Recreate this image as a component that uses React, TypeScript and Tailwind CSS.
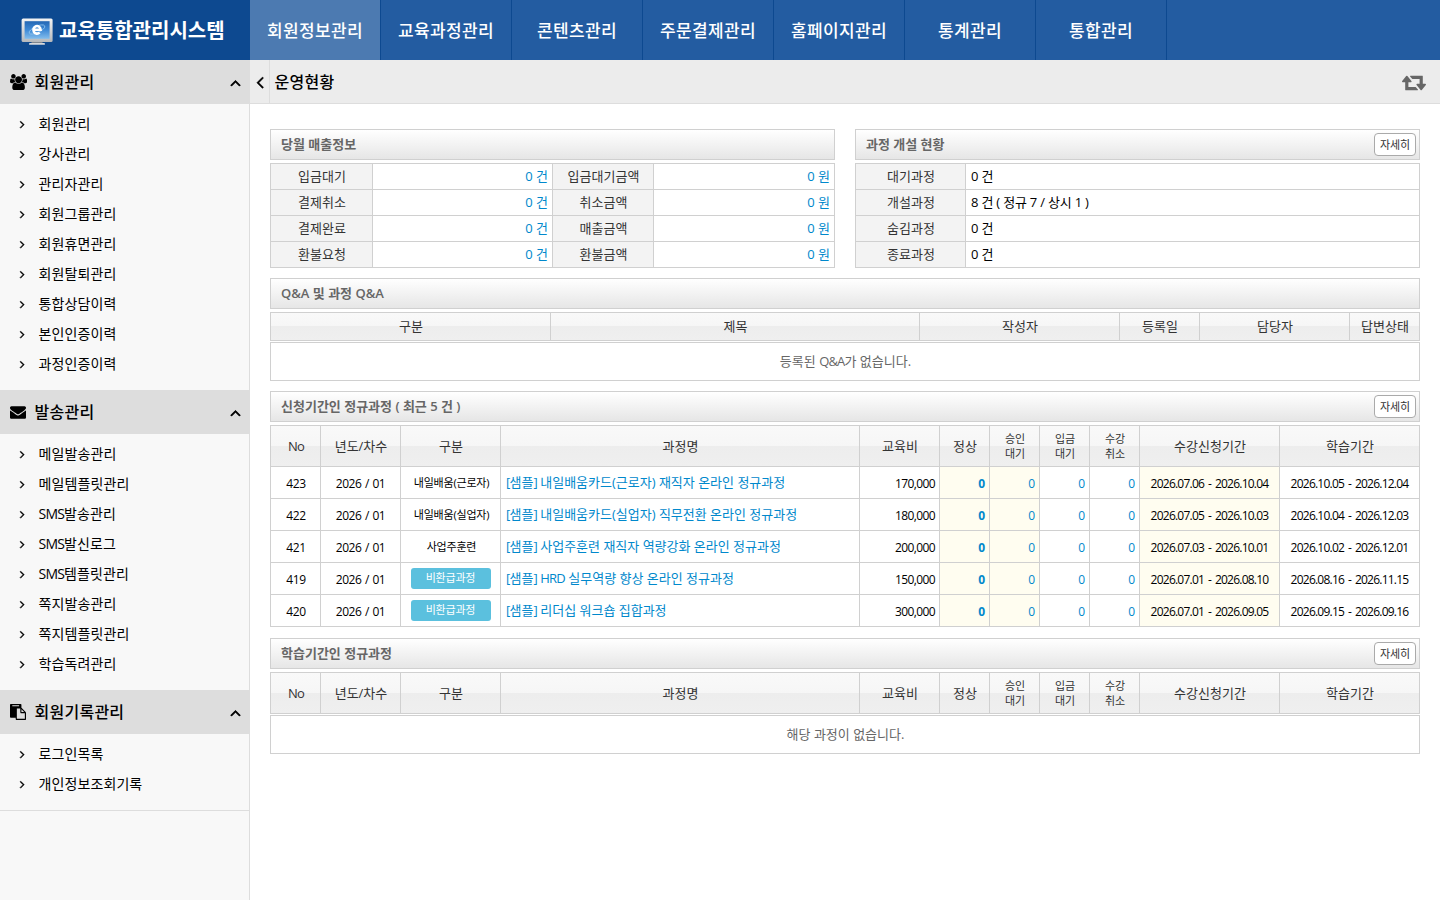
import React from 'react';

interface MenuGroup {
  title: string;
  icon: React.ReactNode;
  items: string[];
}

interface Course {
  no: number;
  type: string;
  badge?: boolean;
  name: string;
  price: string;
  apply: string;
  study: string;
}

interface IconProps {
  path: string;
  size: number;
  width?: number;
  stroke?: number;
  className?: string;
}

const Icon: React.FC<IconProps> = ({ path, size, width = 1792, stroke = 0, className }) => (
  <svg
    width={(size * width) / 1792}
    height={size}
    viewBox={`0 0 ${width} 1792`}
    fill="currentColor"
    stroke="currentColor"
    strokeWidth={stroke}
    className={className}
  >
    <path d={path} />
  </svg>
);

const icons = {
  users: 'M593 896q-162 5-265 128h-134q-82 0-138-40.5t-56-118.5q0-353 124-353 6 0 43.5 21t97.5 42.5 119 21.5q67 0 133-23-5 37-5 66 0 139 81 256zm1071 637q0 120-73 189.5t-194 69.5h-874q-121 0-194-69.5t-73-189.5q0-53 3.5-103.5t14-109 26.5-108.5 43-97.5 62-81 85.5-53.5 111.5-20q10 0 43 21.5t73 48 107 48 135 21.5 135-21.5 107-48 73-48 43-21.5q61 0 111.5 20t85.5 53.5 62 81 43 97.5 26.5 108.5 14 109 3.5 103.5zm-1024-1277q0 106-75 181t-181 75-181-75-75-181 75-181 181-75 181 75 75 181zm704 384q0 159-112.5 271.5t-271.5 112.5-271.5-112.5-112.5-271.5 112.5-271.5 271.5-112.5 271.5 112.5 112.5 271.5zm576 225q0 78-56 118.5t-138 40.5h-134q-103-123-265-128 81-117 81-256 0-29-5-66 66 23 133 23 59 0 119-21.5t97.5-42.5 43.5-21q124 0 124 353zm-128-609q0 106-75 181t-181 75-181-75-75-181 75-181 181-75 181 75 75 181z',
  envelope: 'M1792 710v794q0 66-47 113t-113 47h-1472q-66 0-113-47t-47-113v-794q44 49 101 87 362 246 497 345 57 42 92.5 65.5t94.5 48 110 24.5h2q51 0 110-24.5t94.5-48 92.5-65.5q170-123 498-345 57-39 100-87zm0-294q0 79-49 151t-122 123q-376 261-468 325-10 7-42.5 31t-54 38.5-52 32.5-57.5 27-50 9h-2q-23 0-50-9t-57.5-27-52-32.5-54-38.5-42.5-31q-91-64-262-182.5t-205-142.5q-62-42-117-115.5t-55-136.5q0-78 41.5-130t118.5-52h1472q65 0 112.5 47t47.5 113z',
  paste: 'M768 1664h896v-640h-416q-40 0-68-28t-28-68v-416h-384v1152zm256-1440v-64q0-13-9.5-22.5t-22.5-9.5h-704q-13 0-22.5 9.5t-9.5 22.5v64q0 13 9.5 22.5t22.5 9.5h704q13 0 22.5-9.5t9.5-22.5zm256 672h299l-299-299v299zm512 128v672q0 40-28 68t-68 28h-960q-40 0-68-28t-28-68v-160h-544q-40 0-68-28t-28-68v-1344q0-40 28-68t68-28h1088q40 0 68 28t28 68v328q21 13 36 28l408 408q28 28 48 76t20 88z',
  up: 'M1395 1184q0 13-10 23l-50 50q-10 10-23 10t-23-10l-393-393-393 393q-10 10-23 10t-23-10l-50-50q-10-10-10-23t10-23l466-466q10-10 23-10t23 10l466 466q10 10 10 23z',
  right: 'M1171 960q0 13-10 23l-466 466q-10 10-23 10t-23-10l-50-50q-10-10-10-23t10-23l393-393-393-393q-10-10-10-23t10-23l50-50q10-10 23-10t23 10l466 466q10 10 10 23z',
  left: 'M1203 544q0 13-10 23l-393 393 393 393q10 10 10 23t-10 23l-50 50q-10 10-23 10t-23-10l-466-466q-10-10-10-23t10-23l466-466q10-10 23-10t23 10l50 50q10 10 10 23z',
  retweet: 'M1280 1504q0 13-9.5 22.5t-22.5 9.5h-960q-8 0-13.5-2t-9-7-5.5-8-3-11.5-1-11.5v-600h-192q-26 0-45-19t-19-45q0-24 15-41l320-384q19-22 49-22t49 22l320 384q15 17 15 41 0 26-19 45t-45 19h-192v384h576q16 0 25 11l160 192q7 11 7 21zm640-416q0 24-15 41l-320 384q-20 23-49 23t-49-23l-320-384q-15-17-15-41 0-26 19-45t45-19h192v-384h-576q-16 0-25-12l-160-192q-7-9-7-20 0-13 9.5-22.5t22.5-9.5h960q8 0 13.5 2t9 7 5.5 8 3 11.5 1 11.5v600h192q26 0 45 19t19 45z'
};

const topMenus = ['회원정보관리', '교육과정관리', '콘텐츠관리', '주문결제관리', '홈페이지관리', '통계관리', '통합관리'];

const sideMenus: MenuGroup[] = [
  {
    title: '회원관리',
    icon: <Icon path={icons.users} size={16} width={1920} />,
    items: ['회원관리', '강사관리', '관리자관리', '회원그룹관리', '회원휴면관리', '회원탈퇴관리', '통합상담이력', '본인인증이력', '과정인증이력']
  },
  {
    title: '발송관리',
    icon: <Icon path={icons.envelope} size={16} />,
    items: ['메일발송관리', '메일템플릿관리', 'SMS발송관리', 'SMS발신로그', 'SMS템플릿관리', '쪽지발송관리', '쪽지템플릿관리', '학습독려관리']
  },
  {
    title: '회원기록관리',
    icon: <Icon path={icons.paste} size={16} />,
    items: ['로그인목록', '개인정보조회기록']
  }
];

const salesRows = [
  ['입금대기', '입금대기금액'],
  ['결제취소', '취소금액'],
  ['결제완료', '매출금액'],
  ['환불요청', '환불금액']
];

const openRows = [
  ['대기과정', '0 건'],
  ['개설과정', '8 건 ( 정규 7 / 상시 1 )'],
  ['숨김과정', '0 건'],
  ['종료과정', '0 건']
];

const courses: Course[] = [
  { no: 423, type: '내일배움(근로자)', name: '[샘플] 내일배움카드(근로자) 재직자 온라인 정규과정', price: '170,000', apply: '2026.07.06 - 2026.10.04', study: '2026.10.05 - 2026.12.04' },
  { no: 422, type: '내일배움(실업자)', name: '[샘플] 내일배움카드(실업자) 직무전환 온라인 정규과정', price: '180,000', apply: '2026.07.05 - 2026.10.03', study: '2026.10.04 - 2026.12.03' },
  { no: 421, type: '사업주훈련', name: '[샘플] 사업주훈련 재직자 역량강화 온라인 정규과정', price: '200,000', apply: '2026.07.03 - 2026.10.01', study: '2026.10.02 - 2026.12.01' },
  { no: 419, type: '비환급과정', badge: true, name: '[샘플] HRD 실무역량 향상 온라인 정규과정', price: '150,000', apply: '2026.07.01 - 2026.08.10', study: '2026.08.16 - 2026.11.15' },
  { no: 420, type: '비환급과정', badge: true, name: '[샘플] 리더십 워크숍 집합과정', price: '300,000', apply: '2026.07.01 - 2026.09.05', study: '2026.09.15 - 2026.09.16' }
];

const cell = 'flex items-center border-r border-b border-[#d0d0d0]';
const labelCell = `${cell} h-[26px] justify-center bg-[#f3f3f3] pl-[1px] text-[#333]`;
const headCell = `${cell} justify-center bg-[linear-gradient(#f9f9f9_0%,#f6f6f6_50%,#ededed_50%,#efefef_100%)] pl-[1px] text-[#333]`;
const countCell = `${cell} justify-end pt-[2px] pr-[4px] text-[12px] text-[#0088cc]`;
const dateCell = `${cell} justify-center pt-[2px] text-[12px] tracking-[-0.77px] [word-spacing:1.5px]`;
const courseGrid = 'grid grid-cols-[50px_80px_100px_359px_80px_50px_50px_50px_50px_140px_140px] border-l border-t border-[#d0d0d0]';

// Latin runs are set tighter than the Hangul around them
const Label: React.FC<{ text: string }> = ({ text }) => (
  <span className="whitespace-pre">
    {text.split(/([A-Za-z&[\]]+)/).map((part, i) =>
      i % 2 ? <span key={i} className="tracking-[-0.8px]">{part}</span> : part
    )}
  </span>
);

const LogoIcon = () => (
  <svg width="32" height="28" viewBox="0 0 32 28" className="mt-[3px]">
    <defs>
      <linearGradient id="screen" x1="0" y1="0" x2="0" y2="1">
        <stop offset="0" stopColor="#2467b4" />
        <stop offset="0.5" stopColor="#3f8ad6" />
        <stop offset="1" stopColor="#83bdec" />
      </linearGradient>
      <linearGradient id="frame" x1="0" y1="0" x2="0" y2="1">
        <stop offset="0" stopColor="#f4f4f4" />
        <stop offset="1" stopColor="#b4b7bb" />
      </linearGradient>
    </defs>
    <path d="M11 23.5h10l1 2H10z" fill="#7f858c" />
    <rect x="8" y="25" width="16" height="1.8" rx="0.9" fill="#d5d8dc" />
    <rect x="0.6" y="0.5" width="31" height="23.6" rx="1.5" fill="url(#frame)" />
    <rect x="3.6" y="3.2" width="25" height="17.6" fill="url(#screen)" />
    <ellipse cx="16" cy="11.5" rx="8.5" ry="3.2" transform="rotate(-25 16 11.5)" fill="none" stroke="#8fc3ee" strokeWidth="0.8" />
    <path d="M12.4 11.7h7.2a3.6 3.8 0 1 0-1 2.8" fill="none" stroke="#fff" strokeWidth="2.6" />
  </svg>
);

const PanelTitle: React.FC<{ title: string; more?: boolean }> = ({ title, more }) => (
  <div className="flex h-[31px] items-center justify-between border border-[#d0d0d0] bg-linear-to-b from-white to-[#e6e6e6] pr-[3px] pl-[10px]">
    <h3 className="pt-[1px] text-[13px] font-semibold text-[#666]">{title}</h3>
    {more && (
      <button className="h-[23px] w-[42px] rounded-[4px] border border-[#aaa] bg-white text-[11px] leading-none tracking-[-0.2px] text-[#333]">
        자세히
      </button>
    )}
  </div>
);

const EmptyRow: React.FC<{ text: string }> = ({ text }) => (
  <div className="mt-px flex h-[39px] items-center justify-center border border-[#d0d0d0] pt-[1px] pl-[1px] text-[#666]">
    <Label text={text} />
  </div>
);

const CourseHead = () => (
  <>
    {['No', '년도/차수', '구분', '과정명', '교육비', '정상'].map(label => (
      <div key={label} className={`${headCell} h-[41px] pt-[2px]`}><Label text={label} /></div>
    ))}
    {[['승인', '대기'], ['입금', '대기'], ['수강', '취소']].map(([a, b]) => (
      <div key={a} className={`${headCell} h-[41px] text-center text-[11px] leading-[15px]`}>{a}<br />{b}</div>
    ))}
    <div className={`${headCell} h-[41px] pt-[2px]`}>수강신청기간</div>
    <div className={`${headCell} h-[41px] pt-[2px]`}>학습기간</div>
  </>
);

const Sidebar = () => (
  <aside className="w-[250px] shrink-0 border-r border-[#ddd] bg-[#f8f8f8]">
    {sideMenus.map(group => (
      <section key={group.title}>
        <h2 className="flex h-[44px] items-center bg-[#ddd] pr-[5px] pl-[10px] text-[16px] font-medium tracking-[0.25px]">
          <span className="w-[24.5px]">{group.icon}</span>
          {group.title}
          <Icon path={icons.up} size={17} stroke={80} className="mr-[0.5px] ml-auto" />
        </h2>
        <ul className="pt-[6px] pb-[10px]">
          {group.items.map(item => (
            <li key={item} className="flex h-[30px] items-center pl-[16px] text-[14px] tracking-[0.1px]">
              <Icon path={icons.right} size={12.5} stroke={70} className="mr-[10px] mb-[1px]" />
              <span className="pb-[3px]"><Label text={item} /></span>
            </li>
          ))}
        </ul>
      </section>
    ))}
    <div className="border-t border-[#ddd]" />
  </aside>
);

const App: React.FC = () => {
  return (
    <div className="flex h-[900px] w-[1440px] flex-col overflow-hidden bg-white font-['Open_Sans','Noto_Sans_CJK_KR',sans-serif] text-[13px] text-black">
      <header className="flex h-[60px] shrink-0 bg-[#235ca1] text-white">
        <div className="flex w-[250px] items-center bg-[#0d4990] pl-[21px]">
          <LogoIcon />
          <h1 className="ml-[6px] pt-[2px] text-[20px] font-bold">교육통합관리시스템</h1>
        </div>
        <nav className="flex">
          {topMenus.map((menu, i) => (
            <a
              key={menu}
              className={`flex w-[131px] items-center justify-center border-r border-[#0d4990] pt-[2px] text-[17px] font-medium tracking-[0.35px] ${i === 0 ? 'bg-[#4c7ab1]' : ''}`}
            >
              {menu}
            </a>
          ))}
        </nav>
      </header>

      <div className="flex min-h-0 flex-1">
        <Sidebar />

        <main className="flex-1">
          <div className="flex h-[44px] items-center border-b border-[#ddd] bg-[#ececec]">
            <div className="flex h-full w-[20px] items-center justify-center border-r border-[#ddd]">
              <Icon path={icons.left} size={20} stroke={40} className="shrink-0" />
            </div>
            <h2 className="pl-[4.5px] text-[16px] font-medium tracking-[0.25px]">운영현황</h2>
            <Icon path={icons.retweet} size={22.4} width={1920} className="mt-[1px] mr-[14px] ml-auto text-[#666]" />
          </div>

          <div className="flex flex-col gap-[10px] px-[20px] pt-[25px]">
            <div className="grid grid-cols-2 gap-[20px]">
              <section>
                <PanelTitle title="당월 매출정보" />
                <div className="mt-[3px] grid grid-cols-[102px_180px_101px_181px] border-t border-l border-[#d0d0d0]">
                  {salesRows.map(([count, amount]) => (
                    <React.Fragment key={count}>
                      <div className={labelCell}>{count}</div>
                      <div className={`${cell} h-[26px] justify-end pr-[4px] text-[#0088cc]`}>0 건</div>
                      <div className={labelCell}>{amount}</div>
                      <div className={`${cell} h-[26px] justify-end pr-[4px] text-[#0088cc]`}>0 원</div>
                    </React.Fragment>
                  ))}
                </div>
              </section>
              <section>
                <PanelTitle title="과정 개설 현황" more />
                <div className="mt-[3px] grid grid-cols-[110px_454px] border-t border-l border-[#d0d0d0]">
                  {openRows.map(([label, value]) => (
                    <React.Fragment key={label}>
                      <div className={labelCell}>{label}</div>
                      <div className={`${cell} h-[26px] pl-[5px] tracking-[-0.2px]`}>{value}</div>
                    </React.Fragment>
                  ))}
                </div>
              </section>
            </div>

            <section>
              <PanelTitle title="Q&A 및 과정 Q&A" />
              <div className="mt-[3px] grid grid-cols-[280px_369px_200px_80px_150px_70px] border-t border-l border-[#d0d0d0]">
                {['구분', '제목', '작성자', '등록일', '담당자', '답변상태'].map(label => (
                  <div key={label} className={`${headCell} h-[28px]`}>{label}</div>
                ))}
              </div>
              <EmptyRow text="등록된 Q&A가 없습니다." />
            </section>

            <section>
              <PanelTitle title="신청기간인 정규과정 ( 최근 5 건 )" more />
              <div className={`${courseGrid} mt-[3px]`}>
                <CourseHead />
                {courses.map(course => (
                  <React.Fragment key={course.no}>
                    <div className={`${cell} h-[32px] justify-center pt-[2px] pl-[1px] text-[12px] tracking-[-0.4px]`}>{course.no}</div>
                    <div className={`${cell} justify-center pt-[2px] text-[12px] tracking-[-0.5px] [word-spacing:1px]`}>2026 / 01</div>
                    <div className={`${cell} justify-center pt-[1px] pl-[2px] text-[11px] tracking-[-0.2px]`}>
                      {course.badge ? (
                        <span className="-mt-[1px] -ml-[2px] flex h-[21px] w-[80px] items-center justify-center rounded-[3px] bg-[#5bc0de] text-white">{course.type}</span>
                      ) : (
                        course.type
                      )}
                    </div>
                    <div className={`${cell} pl-[5px] text-[#0088cc]`}><Label text={course.name} /></div>
                    <div className={`${cell} justify-end pt-[2px] pr-[4px] text-[12px] tracking-[-0.6px]`}>{course.price}</div>
                    <div className={`${countCell} bg-[#fffdf0] font-bold`}>0</div>
                    <div className={`${countCell} bg-[#fffdf0]`}>0</div>
                    <div className={countCell}>0</div>
                    <div className={countCell}>0</div>
                    <div className={`${dateCell} bg-[#fffdf0]`}>{course.apply}</div>
                    <div className={dateCell}>{course.study}</div>
                  </React.Fragment>
                ))}
              </div>
            </section>

            <section className="mt-px">
              <PanelTitle title="학습기간인 정규과정" more />
              <div className={`${courseGrid} mt-[3px]`}>
                <CourseHead />
              </div>
              <EmptyRow text="해당 과정이 없습니다." />
            </section>
          </div>
        </main>
      </div>
    </div>
  );
};

export default App;
